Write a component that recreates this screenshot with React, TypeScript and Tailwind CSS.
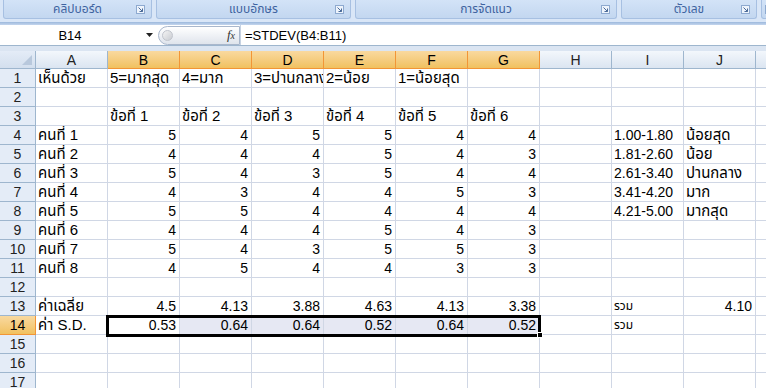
import React from "react";

const COLS = ["A", "B", "C", "D", "E", "F", "G", "H", "I", "J", "K"];
const SEL_COLS = new Set(["B", "C", "D", "E", "F", "G"]);

type Cell = { t: string; r?: boolean; small?: boolean };
type Row = Record<string, Cell>;

const data: Record<number, Row> = {
  1: {
    A: { t: "เห็นด้วย" },
    B: { t: "5=มากสุด" },
    C: { t: "4=มาก" },
    D: { t: "3=ปานกลาง" },
    E: { t: "2=น้อย" },
    F: { t: "1=น้อยสุด" },
  },
  3: {
    B: { t: "ข้อที่ 1" },
    C: { t: "ข้อที่ 2" },
    D: { t: "ข้อที่ 3" },
    E: { t: "ข้อที่ 4" },
    F: { t: "ข้อที่ 5" },
    G: { t: "ข้อที่ 6" },
  },
  13: {
    A: { t: "ค่าเฉลี่ย" },
    B: { t: "4.5", r: true },
    C: { t: "4.13", r: true },
    D: { t: "3.88", r: true },
    E: { t: "4.63", r: true },
    F: { t: "4.13", r: true },
    G: { t: "3.38", r: true },
    I: { t: "รวม", small: true },
    J: { t: "4.10", r: true },
  },
  14: {
    A: { t: "ค่า S.D." },
    B: { t: "0.53", r: true },
    C: { t: "0.64", r: true },
    D: { t: "0.64", r: true },
    E: { t: "0.52", r: true },
    F: { t: "0.64", r: true },
    G: { t: "0.52", r: true },
    I: { t: "รวม", small: true },
  },
};

const scores = [
  [5, 4, 5, 5, 4, 4],
  [4, 4, 4, 5, 4, 3],
  [5, 4, 3, 5, 4, 4],
  [4, 3, 4, 4, 5, 3],
  [5, 5, 4, 4, 4, 4],
  [4, 4, 4, 5, 4, 3],
  [5, 4, 3, 5, 5, 3],
  [4, 5, 4, 4, 3, 3],
];
const ranges = ["1.00-1.80", "1.81-2.60", "2.61-3.40", "3.41-4.20", "4.21-5.00"];
const levels = ["น้อยสุด", "น้อย", "ปานกลาง", "มาก", "มากสุด"];

scores.forEach((s, i) => {
  const row: Row = { A: { t: `คนที่ ${i + 1}` } };
  ["B", "C", "D", "E", "F", "G"].forEach((c, j) => {
    row[c] = { t: String(s[j]), r: true };
  });
  if (i < 5) {
    row.I = { t: ranges[i], r: false };
    row.J = { t: levels[i] };
  }
  data[i + 4] = row;
});

const FONT = { fontFamily: "Tahoma, 'Liberation Sans', 'Noto Sans Thai', 'DejaVu Sans', sans-serif" };
const hasThai = (s: string) => /[\u0E00-\u0E7F]/.test(s);

function Launcher() {
  return (
    <svg width="9" height="9" viewBox="0 0 9 9" className="shrink-0">
      <rect x="0.5" y="0.5" width="8" height="8" fill="#eef4fc" stroke="#8eaad0" />
      <path d="M2.5 2.5 L6.5 6.5 M6.5 3.5 V6.5 H3.5" stroke="#4a6a98" strokeWidth="1" fill="none" />
    </svg>
  );
}

function Group({ label, w }: { label: string; w: string }) {
  return (
    <div
      className={`${w} h-[19px] shrink-0 rounded-b-[3px] border border-t-0 border-[#a7c0e2] bg-gradient-to-b from-[#d3e3f7] to-[#c3d7f0] flex items-center relative`}
    >
      <div className="flex-1 text-center text-[12px] leading-none text-[#3e63a0]">{label}</div>
      <div className="absolute right-[6px] top-[5px]">
        <Launcher />
      </div>
    </div>
  );
}

export default function App() {
  return (
    <div className="w-[766px] h-[388px] overflow-hidden bg-white relative" style={FONT}>
      {/* Ribbon label strip */}
      <div className="h-[22px] bg-[#d9e6f7] flex gap-[4px] pl-[3px]">
        <Group label="คลิปบอร์ด" w="w-[149px]" />
        <Group label="แบบอักษร" w="w-[195px]" />
        <Group label="การจัดแนว" w="w-[262px]" />
        <Group label="ตัวเลข" w="w-[136px]" />
        <Group label="" w="w-[20px]" />
      </div>
      <div className="h-[3px] bg-gradient-to-b from-[#9cb8dc] to-[#c4d6ee]" />
      {/* Formula bar */}
      <div className="h-[21px] bg-white flex items-center border-b border-[#9eb6ce]">
        <div className="w-[140px] text-center text-[13px] text-black leading-none">B14</div>
        <div className="w-[18px] flex justify-center">
          <svg width="7" height="4" viewBox="0 0 7 4">
            <path d="M0 0 H7 L3.5 4 Z" fill="#222" />
          </svg>
        </div>
        <div className="w-[82px] h-[19px] rounded-l-full border border-[#a9b7cc] bg-gradient-to-b from-[#ffffff] to-[#dfe4ec] flex items-center justify-between pl-[3px] pr-[4px]">
          <div className="w-[11px] h-[11px] rounded-full bg-gradient-to-br from-[#f4f4f4] to-[#c9ccd2] border border-[#c0c4cc]" />
          <span className="text-[13px] italic text-[#333]" style={{ fontFamily: "'Liberation Serif', serif" }}>
            f<span className="text-[10px]">x</span>
          </span>
        </div>
        <div className="w-px h-full bg-[#c6d2e2]" />
        <div className="pl-[4px] text-[13px] text-black leading-none">=STDEV(B4:B11)</div>
      </div>
      <div className="h-[5px] bg-[#dbe5f2]" />
      {/* Grid */}
      <div className="flex flex-col">
        {/* header row */}
        <div className="flex h-[18px]">
          <div className="w-[36px] shrink-0 bg-gradient-to-b from-[#e4ecf7] to-[#d3dfee] border-r border-b border-[#9eb6ce] relative">
            <svg className="absolute right-[3px] bottom-[3px]" width="10" height="10" viewBox="0 0 10 10">
              <path d="M10 0 V10 H0 Z" fill="#b8c8dc" />
            </svg>
          </div>
          {COLS.map((c) => (
            <div
              key={c}
              className={`w-[72px] shrink-0 border-r border-b flex items-center justify-center text-[14px] leading-none ${
                SEL_COLS.has(c)
                  ? "bg-gradient-to-b from-[#f9d99f] to-[#f1c15f] border-[#f29536] text-black"
                  : "bg-gradient-to-b from-[#f3f7fc] to-[#dbe5f1] border-[#9eb6ce] text-[#222]"
              }`}
            >
              {c === "K" ? "" : c}
            </div>
          ))}
        </div>
        {Array.from({ length: 17 }, (_, i) => i + 1).map((rn) => {
          const row = data[rn] || {};
          const selRow = rn === 14;
          return (
            <div key={rn} className="flex h-[19px]">
              <div
                className={`w-[36px] shrink-0 border-r border-b flex items-center justify-center text-[14px] leading-none ${
                  selRow
                    ? "bg-gradient-to-b from-[#f9d99f] to-[#f1c15f] border-[#f29536] text-black"
                    : "bg-[#e4ecf7] border-[#9eb6ce] text-[#222]"
                }`}
              >
                {rn}
              </div>
              {COLS.map((c) => {
                const cell = row[c];
                const tinted = selRow && SEL_COLS.has(c) && c !== "B";
                const thai = cell ? hasThai(cell.t) : false;
                const size = cell?.small ? "text-[12px]" : thai ? "text-[15px]" : "text-[14px]";
                return (
                  <div
                    key={c}
                    className={`w-[72px] shrink-0 border-r border-b border-[#d0d7e5] flex items-center overflow-hidden whitespace-nowrap pl-[2px] pr-[3px] text-black ${
                      tinted ? "bg-[#e6e8f3]" : "bg-white"
                    } ${cell?.r ? "justify-end" : "justify-start"} ${size}`}
                  >
                    {cell?.t ?? ""}
                  </div>
                );
              })}
            </div>
          );
        })}
      </div>
      {/* selection outline B14:G14 */}
      <div className="absolute left-[106px] top-[315px] w-[435px] h-[22px] border-[3px] border-black pointer-events-none" />
      <div className="absolute left-[537px] top-[332px] w-[6px] h-[6px] bg-black border border-white pointer-events-none" />
    </div>
  );
}
